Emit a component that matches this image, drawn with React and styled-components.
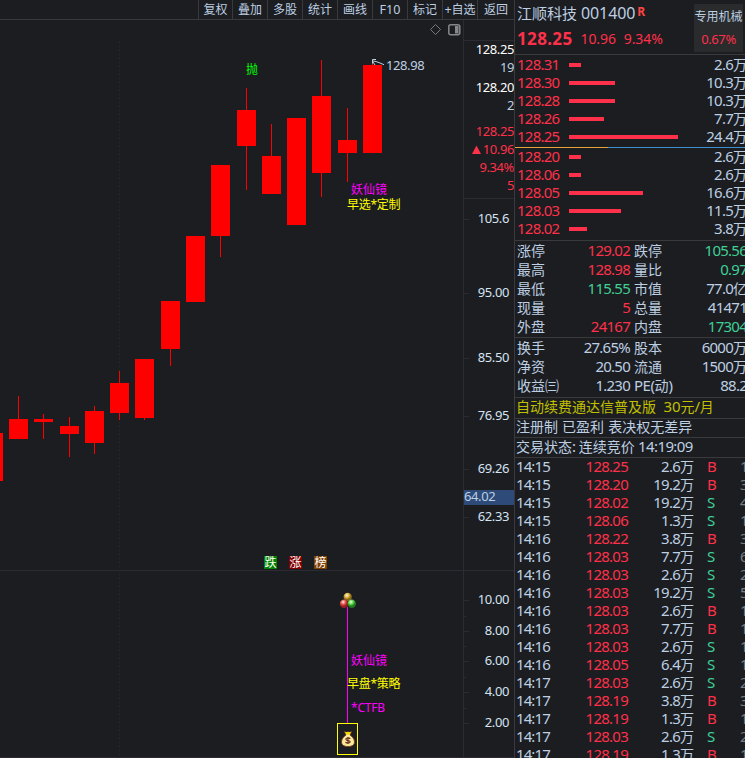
import React from "react";
import styled, { createGlobalStyle } from "styled-components";

const C = {
  bg: "#1c1d20",
  line: "#3a3a3c",
  axis: "#2b2b31",
  text: "#bccfe3",
  red: "#ff304a",
  green: "#3fcf97",
  candle: "#ff0000",
};
const FONT = `"Noto Sans", "Noto Sans CJK SC", sans-serif`;

const GlobalStyle = createGlobalStyle`
  * { box-sizing: border-box; }
  body { margin: 0; background: ${C.bg}; overflow: hidden; }
`;

const Screen = styled.div`
  display: grid;
  grid-template-columns: 514px 231px;
  width: 745px;
  height: 758px;
  overflow: hidden;
  background: ${C.bg};
  color: ${C.text};
  font-family: ${FONT};
  white-space: pre;
`;

/* Latin digits are set slightly narrow; ideographs keep their own size. */
const TextRun = styled.span`
  display: block;
  font-size: ${(p) => p.$size}px;
  letter-spacing: ${(p) => p.$track}px;
  font-weight: ${(p) => (p.$bold ? 700 : 400)};
  color: ${(p) => p.$color || "inherit"};
  line-height: 18px;
  margin-top: ${(p) => p.$drop || 0}px;
`;
const Han = styled.span`
  font-family: "Noto Sans CJK SC", sans-serif;
  font-size: ${(p) => p.$size}px;
  letter-spacing: 0;
  line-height: 0;
`;
const HAN = /([\u3000-\u9fff\u3200-\u32ff]+)/;
function Text({ children, size = 15, han = 14, track = -0.75, color, bold, drop }) {
  return (
    <TextRun $size={size} $track={track} $color={color} $bold={bold} $drop={drop}>
      {String(children)
        .split(HAN)
        .map((s, i) => (i % 2 ? <Han key={i} $size={han}>{s}</Han> : s))}
    </TextRun>
  );
}

/* ---------- left side ---------- */
const ChartSide = styled.section`
  display: grid;
  grid-template-rows: 20px 738px;
`;
const Toolbar = styled.nav`
  display: grid;
  grid-template-columns: 34px repeat(7, 35px) 37px;
  justify-content: end;
  border-bottom: 1px solid ${C.line};
  height: 20px;
`;
const Tool = styled.button`
  all: unset;
  box-sizing: border-box;
  display: flex;
  justify-content: center;
  align-items: center;
  height: 19px;
  border-left: 1px solid ${C.line};
`;
const ChartBody = styled.div`
  display: grid;
  grid-template-columns: 463px 51px;
`;
const Plot = styled.svg`
  display: block;
  shape-rendering: crispEdges;
`;
const Smooth = styled.g`
  shape-rendering: geometricPrecision;
`;
const Mark = styled.text`
  font: 12px "Noto Sans", "Noto Sans CJK SC", sans-serif;
  fill: ${(p) => p.$fill};
  letter-spacing: ${(p) => p.$track || 0}px;
`;
const AxisNum = styled.text`
  font: 13px ${FONT};
  letter-spacing: -0.4px;
  text-anchor: ${(p) => p.$anchor || "end"};
  fill: ${(p) => p.$fill || "#d5e3f2"};
`;
const Axis = styled.div`
  display: grid;
  grid-template-rows: 20px 159px 559px;
  border-left: 1px solid ${C.axis};
`;
const Quote = styled.div`
  grid-row: 2;
  display: flex;
  flex-direction: column;
  align-items: flex-end;
  border: solid ${C.axis};
  border-width: 1px 0;
`;
const QuoteRow = styled.div`
  display: flex;
  align-items: center;
  gap: 2px;
  height: ${(p) => p.$h}px;
  flex: none;
  color: ${(p) => p.$color};
`;
const ScaleCell = styled.div`
  grid-row: 3;
`;

const tools = ["复权", "叠加", "多股", "统计", "画线", "F10", "标记", "+自选", "返回"];

/* x, body top, body bottom, wick top, wick bottom */
const candles = [
  [-16, 433, 481, 433, 481], [9, 419, 439, 396, 439], [34, 419, 422, 414, 439],
  [60, 426, 434, 417, 457], [85, 411, 443, 406, 454], [110, 383, 413, 371, 420],
  [135, 359, 418, 359, 420], [161, 301, 349, 301, 366], [186, 236, 302, 236, 302],
  [211, 165, 236, 165, 257], [237, 110, 146, 88, 190], [262, 156, 194, 124, 194],
  [287, 118, 225, 118, 225], [312, 96, 173, 60, 197], [338, 140, 153, 108, 182],
  [363, 65, 153, 63, 153],
];
const priceTicks = [["105.6", 219], ["95.00", 293], ["85.50", 358], ["76.95", 416], ["69.26", 469], ["62.33", 517]];
const volTicks = [["10.00", 600], ["8.00", 631], ["6.00", 661], ["4.00", 692], ["2.00", 723]];
const tags = [["跌", 264, "#008000"], ["涨", 289, "#800000"], ["榜", 314, "#804000"]];

function Chart() {
  return (
    <Plot width="463" height="738" viewBox="0 20 463 738">
      <defs>
        <radialGradient id="gold" cx=".4" cy=".3"><stop offset="0" stopColor="#fffbe0" /><stop offset=".55" stopColor="#dcb040" /><stop offset="1" stopColor="#8a6518" /></radialGradient>
        <radialGradient id="ruby" cx=".4" cy=".3"><stop offset="0" stopColor="#ffe8e4" /><stop offset=".55" stopColor="#e45a50" /><stop offset="1" stopColor="#9a2020" /></radialGradient>
        <radialGradient id="jade" cx=".4" cy=".3"><stop offset="0" stopColor="#efffe4" /><stop offset=".55" stopColor="#5cd84a" /><stop offset="1" stopColor="#1f7a1c" /></radialGradient>
      </defs>
      <path d="M119.5 42V758" stroke="#2b2c30" strokeDasharray="1 3" />
      <path d="M0 570.5H463M0 757.5H463" stroke={C.axis} />
      <Smooth>
        <path d="M435.5 24.5l5 5-5 5-5-5z" fill="none" stroke="#77797e" />
        <rect x="448.8" y="24.8" width="11" height="10" rx="2" fill="none" stroke="#85878b" strokeWidth="1.5" />
        <rect x="455" y="26" width="3.5" height="7.5" fill="#85878b" />
      </Smooth>
      {candles.map(([x, t, b, wt, wb]) => (
        <g key={x} fill={C.candle}>
          <rect x={x + 9} y={wt} width="1" height={wb - wt} />
          <rect x={x} y={t} width="19" height={b - t} />
        </g>
      ))}
      <Smooth>
        <path d="M376 59.5H372.5V63.500M373 61l3 .5 4 1.500 4 1.700M373 62l2 3" fill="none" stroke={C.text} />
      </Smooth>
      <AxisNum x="386" y="70" $anchor="start" $fill={C.text}>128.98</AxisNum>
      <Mark x="246" y="74" $fill="#00ff00">抛</Mark>
      <Mark x="351" y="194" $fill="#ff00ff">妖仙镜</Mark>
      <Mark x="347" y="209" $fill="#ffff00" $track={-0.3}>早选*定制</Mark>
      {tags.map(([s, x, c]) => (
        <g key={s}>
          <rect x={x} y="556" width="13" height="13" fill={c} />
          <Mark x={x + 0.5} y="567" $fill="#ffffff">{s}</Mark>
        </g>
      ))}
      <path d="M347.5 607V723" stroke="#ff00ff" />
      <Smooth>
        <circle cx="347.7" cy="597" r="4.200" fill="url(#gold)" />
        <circle cx="344" cy="603.7" r="4.200" fill="url(#ruby)" />
        <circle cx="351.8" cy="603.7" r="4.200" fill="url(#jade)" />
      </Smooth>
      <Mark x="351" y="665" $fill="#ff00ff">妖仙镜</Mark>
      <Mark x="347" y="688" $fill="#ffff00" $track={-0.3}>早盘*策略</Mark>
      <Mark x="351" y="712" $fill="#ff00ff" $track={-0.2}>*CTFB</Mark>
      <rect x="337.5" y="723.5" width="20" height="31" fill="none" stroke="#ffff00" />
      <Smooth>
        <path d="M344.5 731.5l2 1 1.500-.7 1.500.7 2-1-1.500 3.500c2.500 1.700 4.500 4 4.500 7 0 3-2.500 4.500-6.500 4.500s-6.500-1.500-6.500-4.500c0-3 2-5.300 4.500-7z" fill="#f8ec98" stroke="#7a3c1c" />
        <path d="M345 732l6 0-1.200 2.500h-3.600z" fill="#f2dc00" />
        <path d="M350.300 738.700c-1.500-1.200-4.500-1-4.500.6 0 1.800 4.400.8 4.400 2.500 0 1.500-3 1.700-4.800.4M348 737v7" fill="none" stroke="#6b2424" strokeWidth="1.100" />
      </Smooth>
    </Plot>
  );
}

function PriceScale() {
  return (
    <Plot width="50" height="559" viewBox="464 199 50 559">
      <path d="M464 570.5H514M464 757.5H514" stroke={C.axis} />
      {[...priceTicks, ...volTicks].map(([s, y]) => (
        <g key={s}>
          <path d={`M464 ${y + 0.5}h5`} stroke={C.axis} />
          <AxisNum x="509" y={y + 4}>{s}</AxisNum>
        </g>
      ))}
      {[616, 646, 677, 708].map((y) => <path key={y} d={`M464 ${y + 0.5}h2`} stroke={C.axis} />)}
      <rect x="464" y="490" width="50" height="15" fill="#2d4a78" />
      <AxisNum x="464" y="501" $anchor="start" $fill={C.text}>64.02</AxisNum>
    </Plot>
  );
}

/* ---------- right side ---------- */
const Panel = styled.aside`
  display: flex;
  flex-direction: column;
  overflow: hidden;
  border-left: 1px solid ${C.line};
`;
const Header = styled.header`
  display: grid;
  grid-template-columns: 179px 51px;
  height: 55px;
  border-bottom: 1px solid ${C.line};
`;
const Names = styled.div`
  display: flex;
  flex-direction: column;
  padding: 3px 0 0 2px;
`;
const NameRow = styled.div`
  display: flex;
  height: 20px;
  gap: ${(p) => p.$gap}px;
  align-items: center;
  margin-bottom: 6px;
`;
const Sector = styled.div`
  display: flex;
  flex-direction: column;
  align-items: center;
  gap: 6px;
  width: 49px;
  height: 48px;
  margin-top: 4px;
  padding-top: 2px;
  background: #292b2c;
`;
const Sup = styled.span`
  align-self: flex-start;
  margin: 0 0 0 -2px;
`;
const Depth = styled.div`
  height: ${(p) => p.$h}px;
  padding-top: ${(p) => p.$top}px;
`;
const DepthRow = styled.div`
  display: grid;
  grid-template: 18px / 52px 1fr auto;
  align-items: center;
  padding-left: 2px;
  margin-right: -2px;
`;
const Bar = styled.div`
  width: ${(p) => p.$w}px;
  height: 4px;
  background: ${C.red};
`;
const Raised = styled.span`
  padding-bottom: 2px;
`;
const Split = styled.div`
  display: grid;
  grid-template-columns: 93px 1fr;
  height: 1px;
`;
const SplitPart = styled.div`
  background: ${(p) => p.$c};
`;
const Stats = styled.div`
  border-top: 1px solid ${C.line};
  height: ${(p) => p.$h}px;
`;
const StatRow = styled.div`
  display: grid;
  grid-template-columns: 50px 63px 50px 1fr;
  height: 19px;
  align-items: center;
  padding: 0 0 1px 2px;
  margin-right: -2px;
`;
const StatName = styled.span`
  padding-left: ${(p) => p.$inset || 0}px;
`;
const Right = styled.span`
  display: flex;
  justify-content: flex-end;
`;
const Notice = styled.div`
  display: flex;
  align-items: center;
  height: ${(p) => p.$h}px;
  padding: 0 0 ${(p) => p.$lift}px 1px;
  border-top: 1px solid ${C.line};
`;
const Trades = styled.div`
  border-top: 1px solid ${C.line};
  flex: 1;
  min-height: 0;
  overflow: hidden;
`;
const TradeRow = styled.div`
  display: grid;
  grid-template: 16px / 50px 62px 66px 26px 26px;
  align-items: center;
  height: 18px;
  padding: 0 0 2px 1px;
`;
const Side = styled.span`
  padding-left: 13px;
`;
const Count = styled.span`
  padding-left: 20px;
  color: #777d84;
`;

const asks = [["128.31", 12, "2.6万"], ["128.30", 46, "10.3万"], ["128.28", 46, "10.3万"], ["128.26", 35, "7.7万"], ["128.25", 109, "24.4万"]];
const bids = [["128.20", 12, "2.6万"], ["128.06", 12, "2.6万"], ["128.05", 74, "16.6万"], ["128.03", 52, "11.5万"], ["128.02", 18, "3.8万"]];
const stats1 = [
  ["涨停", "129.02", C.red, "跌停", "105.56", C.green],
  ["最高", "128.98", C.red, "量比", "0.97", C.green],
  ["最低", "115.55", C.green, "市值", "77.0亿", C.text],
  ["现量", "5", C.red, "总量", "41471", C.text],
  ["外盘", "24167", C.red, "内盘", "17304", C.green],
];
const stats2 = [
  ["换手", "27.65%", C.text, "股本", "6000万", C.text],
  ["净资", "20.50", C.text, "流通", "1500万", C.text],
  ["收益㈢", "1.230", C.text, "PE(动)", "88.2", C.text],
];
const trades = [
  ["14:15", "128.25", "2.6万", "B", "1"], ["14:15", "128.20", "19.2万", "B", "3"],
  ["14:15", "128.02", "19.2万", "S", "4"], ["14:15", "128.06", "1.3万", "S", "1"],
  ["14:16", "128.22", "3.8万", "B", "3"], ["14:16", "128.03", "7.7万", "S", "6"],
  ["14:16", "128.03", "2.6万", "S", "2"], ["14:16", "128.03", "19.2万", "S", "5"],
  ["14:16", "128.03", "2.6万", "B", "1"], ["14:16", "128.03", "7.7万", "B", "1"],
  ["14:16", "128.03", "2.6万", "S", "1"], ["14:16", "128.05", "6.4万", "S", "1"],
  ["14:17", "128.03", "2.6万", "S", "2"], ["14:17", "128.19", "3.8万", "B", "3"],
  ["14:17", "128.19", "1.3万", "B", "1"], ["14:17", "128.03", "2.6万", "S", "2"],
  ["14:17", "128.19", "1.3万", "B", "1"],
];

function DepthRows({ rows }) {
  return rows.map(([p, w, v]) => (
    <DepthRow key={p}>
      <Raised><Text color={C.red}>{p}</Text></Raised>
      <Bar $w={w} />
      <Raised><Text>{v}</Text></Raised>
    </DepthRow>
  ));
}
function StatRows({ rows }) {
  return rows.map(([a, b, bc, c, d, dc]) => (
    <StatRow key={a}>
      <StatName><Text>{a}</Text></StatName>
      <Right><Text color={bc}>{b}</Text></Right>
      <StatName $inset={4}><Text track={-0.5}>{c}</Text></StatName>
      <Right><Text color={dc}>{d}</Text></Right>
    </StatRow>
  ));
}
function Quoted({ children, drop }) {
  return <Text size={13} track={-0.4} drop={drop}>{children}</Text>;
}

export default function App() {
  return (
    <Screen>
      <GlobalStyle />
      <ChartSide>
        <Toolbar>
          {tools.map((t) => (
            <Tool key={t}><Text size={12.5} han={12} track={0}>{t}</Text></Tool>
          ))}
        </Toolbar>
        <ChartBody>
          <Chart />
          <Axis>
            <Quote>
              <QuoteRow $h={16} $color="#fff"><Quoted>128.25</Quoted></QuoteRow>
              <QuoteRow $h={20}><Quoted>19</Quoted></QuoteRow>
              <QuoteRow $h={20} $color="#fff"><Quoted>128.20</Quoted></QuoteRow>
              <QuoteRow $h={16}><Quoted>2</Quoted></QuoteRow>
              <QuoteRow $h={27} $color={C.red}><Quoted drop={9}>128.25</Quoted></QuoteRow>
              <QuoteRow $h={18} $color={C.red}>
                <svg width="9" height="9"><path d="M4.500 0.500L9 9H0z" fill={C.red} /></svg>
                <Quoted>10.96</Quoted>
              </QuoteRow>
              <QuoteRow $h={18} $color={C.red}><Quoted>9.34%</Quoted></QuoteRow>
              <QuoteRow $h={18} $color={C.red}><Quoted>5</Quoted></QuoteRow>
            </Quote>
            <ScaleCell><PriceScale /></ScaleCell>
          </Axis>
        </ChartBody>
      </ChartSide>

      <Panel>
        <Header>
          <Names>
            <NameRow $gap={4}>
              <Text han={15}>江顺科技</Text>
              <Text size={16} track={-0.1}>001400</Text>
              <Sup><Text size={12} color="#ff4444" bold>R</Text></Sup>
            </NameRow>
            <NameRow $gap={8}>
              <Text size={17} track={0.35} bold color={C.red}>128.25</Text>
              <Text size={14} track={-0.1} color={C.red}>10.96</Text>
              <Text size={14} track={-0.1} color={C.red}>9.34%</Text>
            </NameRow>
          </Names>
          <Sector>
            <Text han={12}>专用机械</Text>
            <Text size={13} track={-0.4} color={C.red}>0.67%</Text>
          </Sector>
        </Header>
        <Depth $h={92} $top={1}><DepthRows rows={asks} /></Depth>
        <Split><SplitPart $c="#e6a23c" /><SplitPart $c="#3d8fd0" /></Split>
        <Depth $h={92} $top={0}><DepthRows rows={bids} /></Depth>
        <Stats $h={97}><StatRows rows={stats1} /></Stats>
        <Stats $h={60}><StatRows rows={stats2} /></Stats>
        <Notice $h={21} $lift={5}><Text color="#c0c000" track={-0.15}>自动续费通达信普及版  30元/月</Text></Notice>
        <Notice $h={19} $lift={5}><Text track={0.2}>注册制 已盈利 表决权无差异</Text></Notice>
        <Notice $h={20} $lift={3}><Text track={-0.6}>交易状态: 连续竞价 14:19:09</Text></Notice>
        <Trades>
          {trades.map(([t, p, v, s, n], i) => (
            <TradeRow key={i}>
              <Text track={-0.9}>{t}</Text>
              <Right><Text color={C.red}>{p}</Text></Right>
              <Right><Text>{v}</Text></Right>
              <Side><Text color={s === "B" ? C.red : C.green}>{s}</Text></Side>
              <Count><Text>{n}</Text></Count>
            </TradeRow>
          ))}
        </Trades>
      </Panel>
    </Screen>
  );
}
